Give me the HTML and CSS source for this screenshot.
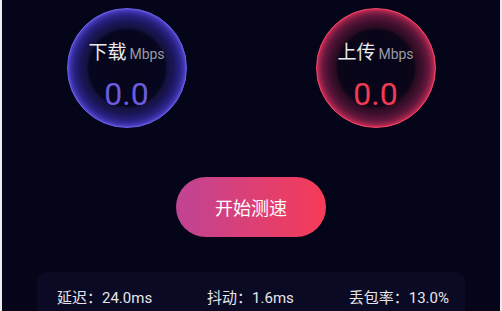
FILE: index.html
```html
<!DOCTYPE html>
<html lang="zh-CN">
  <head>
    <meta charset="UTF-8" />
    <meta name="viewport" content="width=device-width, initial-scale=1.0" />
    <title>网络测速</title>
    <link rel="stylesheet" href="styles.css">
  </head>
  <body>
    <div class="speed">
      <div class="gauges">
        <div class="gauge down">
          <div class="ring">
            <div class="label">下载<span class="unit">Mbps</span></div>
            <div class="value">0.0</div>
          </div>
        </div>
        <div class="gauge up">
          <div class="ring">
            <div class="label">上传<span class="unit">Mbps</span></div>
            <div class="value">0.0</div>
          </div>
        </div>
      </div>
      <div class="action">
        <button class="start">开始测速</button>
      </div>
      <ul class="stats">
        <li class="stat">延迟：24.0ms</li>
        <li class="stat">抖动：1.6ms</li>
        <li class="stat">丢包率：13.0%</li>
      </ul>
    </div>
  </body>
</html>
```

FILE: styles.css
```css
* {
  margin: 0;
  padding: 0;
  box-sizing: border-box;
}

ul {
  list-style: none;
}
html,
body {
  height: 100%;
}
body {
  background-color: #ececf0;
  padding: 0 2px 0 2px;
  font-family: Roboto, "Noto Sans CJK SC", sans-serif;
  overflow: hidden;
}
.speed {
  height: 100%;
  background-color: #05051a;
  padding-top: 8px;
}
.speed .gauges {
  display: flex;
}
.speed .gauge {
  flex: 1;
  display: flex;
  justify-content: center;
}
.speed .ring {
  width: 120px;
  height: 120px;
  border-radius: 50%;
  display: flex;
  flex-direction: column;
  align-items: center;
  padding-top: 31px;
}
.speed .down .ring {
  border: 1px solid #6a5de8;
  background: radial-gradient(
    circle closest-side,
    #05051a 0,
    #070620 64%,
    #151240 69%,
    #1b1658 79%,
    #282180 89%,
    #3d33aa 96%,
    #584bd6 100%
  );
}
.speed .up .ring {
  border: 1px solid #f24466;
  background: radial-gradient(
    circle closest-side,
    #05051a 0,
    #0b0519 64%,
    #2a0c22 69%,
    #40102e 79%,
    #63173b 89%,
    #97224a 96%,
    #cc2d55 100%
  );
}
.speed .label {
  color: #ececec;
  font-size: 19px;
  line-height: 26px;
}
.speed .label .unit {
  color: #9a9aa4;
  font-size: 14px;
  margin-left: 3px;
}
.speed .value {
  font-size: 32px;
  line-height: 38px;
  margin-top: 8px;
}
.speed .down .value {
  color: #6a5cdc;
}
.speed .up .value {
  color: #f23a55;
}
.speed .action {
  display: flex;
  justify-content: center;
  margin-top: 49px;
}
.speed .start {
  width: 150px;
  height: 60px;
  border: none;
  border-radius: 30px;
  background: linear-gradient(90deg, #c04494, #f73b57);
  color: #ffffff;
  font-family: Roboto, "Noto Sans CJK SC", sans-serif;
  font-size: 18px;
  cursor: pointer;
}
.speed .stats {
  margin: 35px 35px 0 35px;
  height: 60px;
  border-radius: 10px;
  background-color: #0a0a24;
  display: flex;
  justify-content: space-between;
  padding: 16px 16px 0 20px;
}
.speed .stats .stat {
  color: #e6e6ea;
  font-size: 15px;
  line-height: 20px;
}
```
